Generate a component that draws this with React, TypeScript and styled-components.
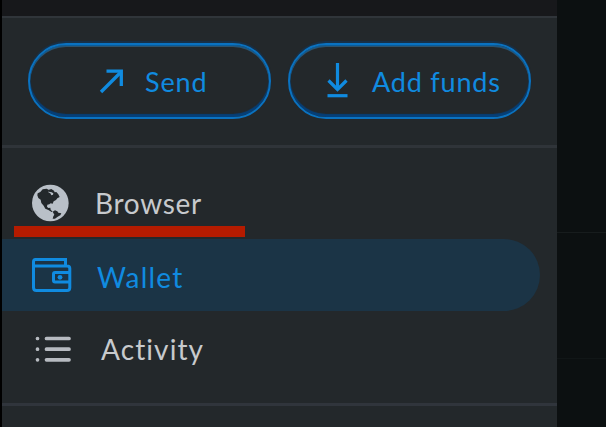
import React from "react";
import styled, { createGlobalStyle } from "styled-components";

const Global = createGlobalStyle`
  * { box-sizing: border-box; }
  body { margin: 0; background: #0c1011; }
`;

const Screen = styled.div`
  display: flex;
  width: 606px;
  height: 427px;
  overflow: hidden;
  background: #0c1011;
  font-family: Lato, "Open Sans", sans-serif;
`;

const Panel = styled.aside`
  display: flex;
  flex-direction: column;
  flex: 0 0 557px;
  border-left: 2px solid #000;
  background: #23282b;
`;

const TopBar = styled.div`
  height: 16px;
  background: #17181b;
`;

const Actions = styled.div`
  display: flex;
  gap: 17px;
  height: 132px;
  padding: 25px 0 0 26px;
  border-top: 2px solid #30353a;
  border-bottom: 3px solid #2f3439;
`;

const ActionButton = styled.button<{ $left: number; $gap: number }>`
  display: flex;
  align-items: center;
  gap: ${(p) => p.$gap}px;
  width: 243px;
  height: 76px;
  padding: 0 0 0 ${(p) => p.$left}px;
  border: 2px solid #0a72c0;
  border-radius: 38px;
  background: transparent;
  box-shadow: 0 -2px 1px #053f7866, inset 0 -3px 1px #053f78, inset 0 1px 0 #0a5c9a, inset 0 2px 0 #2e536c;
  color: #108be0;
  font-family: inherit;
`;

const Label = styled.span<{ $size: number; $spacing: number; $drop?: number }>`
  font-size: ${(p) => p.$size}px;
  line-height: 36px;
  letter-spacing: ${(p) => p.$spacing}px;
  white-space: nowrap;
  padding-top: ${(p) => p.$drop ?? 0}px;
`;

const Menu = styled.nav`
  display: flex;
  flex-direction: column;
  height: 258px;
  padding-top: 19px;
  border-bottom: 3px solid #30353c;
`;

const MenuItem = styled.div<{ $active?: boolean; $gap: number; $height: number; $left?: number }>`
  display: flex;
  align-items: center;
  gap: ${(p) => p.$gap}px;
  width: 538px;
  height: ${(p) => p.$height}px;
  padding-left: ${(p) => p.$left ?? 28}px;
  border-radius: 0 36px 36px 0;
  background: ${(p) => (p.$active ? "#1b3446" : "transparent")};
  color: ${(p) => (p.$active ? "#108be0" : "#c7cacd")};
`;

const Underline = styled.div`
  flex: none;
  width: 231px;
  height: 11px;
  margin: -12px 0 2px 12px;
  background: #b51b00;
`;

const Backdrop = styled.div`
  flex: 1;
  display: grid;
  grid-template-rows: 233px 126px 1fr;
  background: #0c1011;
`;

const BackdropRow = styled.div<{ $line: string }>`
  border-bottom: 1px solid ${(p) => p.$line};
`;

const Icon = styled.svg`
  display: block;
  flex: none;
  overflow: visible;
`;

const SendIcon = () => (
  <Icon width="25" height="27" viewBox="0 0 25 27" fill="none" stroke="currentColor" strokeWidth="3.3">
    <path d="M2 24 22 4" />
    <path d="M7.5 3.2H22.3V18" />
  </Icon>
);

const AddIcon = () => (
  <Icon width="21" height="36" viewBox="0 0 21 36" fill="none" stroke="currentColor" strokeWidth="3.2">
    <path d="M10.5 0V27" />
    <path d="M1.5 17.5 10.5 26.5 19.5 17.5" />
    <path d="M.5 32.7H20.5" />
  </Icon>
);

const GlobeIcon = () => (
  <Icon width="40" height="38" viewBox="33 26 120 114">
    <circle cx="91" cy="83" r="55" fill="#b9c0c8" />
    <g fill="#23282b">
      <path d="M53 54 61 50 68 42 80 40 87 44 85 51 91 54 94 60 99 58 100 54 95 51 86 49 87 43 94 41 102 46 104 51 109 50 115 57 119 65 112 69 108 74 101 78 98 85 92 84 88 87 82 88 81 94 85 98 91 97 92 103 98 109 95 110 85 104 76 100 71 91 64 83 62 73 55 68 52 60Z" />
      <path d="M98 109 105 105 112 108 115 112 124 114 121 120 113 124 105 130 98 130 100 123 103 118Z" />
    </g>
  </Icon>
);

const WalletIcon = () => (
  <Icon width="42" height="36" viewBox="0 0 42 36" fill="none" stroke="currentColor" strokeWidth="3">
    <path d="M35.5 9V2.5H5.5Q3.5 2.5 3.5 5V30.5Q3.5 33.5 6.5 33.5H37Q39.8 33.5 39.8 30.5V11.5Q39.8 9 37 9H3.5" />
    <path d="M39.5 15.5H25Q23.5 15.5 23.5 17V23.5Q23.5 25 25 25H39.5" />
    <circle cx="30" cy="20.3" r="2.4" fill="currentColor" stroke="none" />
  </Icon>
);

const ListIcon = () => (
  <Icon width="42" height="28" viewBox="0 0 42 28" fill="none" stroke="#b7bbc1" strokeWidth="3.7" strokeLinecap="round">
    <path d="M16.5 3.5H39M16.5 14.2H39M16.5 24.8H39" />
    <path d="M7.5 3.5h.01M7.5 14.2h.01M7.5 24.8h.01" />
  </Icon>
);

export default function App() {
  return (
    <Screen>
      <Global />
      <Panel>
        <TopBar />
        <Actions>
          <ActionButton $left={69} $gap={21}>
            <SendIcon />
            <Label $size={27} $spacing={0.9} $drop={1}>Send</Label>
          </ActionButton>
          <ActionButton $left={37} $gap={24}>
            <AddIcon />
            <Label $size={27} $spacing={0.8} $drop={1}>Add funds</Label>
          </ActionButton>
        </Actions>
        <Menu>
          <MenuItem $gap={24} $height={71} $left={29}>
            <GlobeIcon />
            <Label $size={28} $spacing={0.7} $drop={1}>Browser</Label>
          </MenuItem>
          <Underline />
          <MenuItem $active $gap={25} $height={72}>
            <WalletIcon />
            <Label $size={28} $spacing={1.2} $drop={3}>Wallet</Label>
          </MenuItem>
          <MenuItem $gap={29} $height={75}>
            <ListIcon />
            <Label $size={28} $spacing={1.1} $drop={1}>Activity</Label>
          </MenuItem>
        </Menu>
      </Panel>
      <Backdrop>
        <BackdropRow $line="#171c1d" />
        <BackdropRow $line="#111617" />
      </Backdrop>
    </Screen>
  );
}
